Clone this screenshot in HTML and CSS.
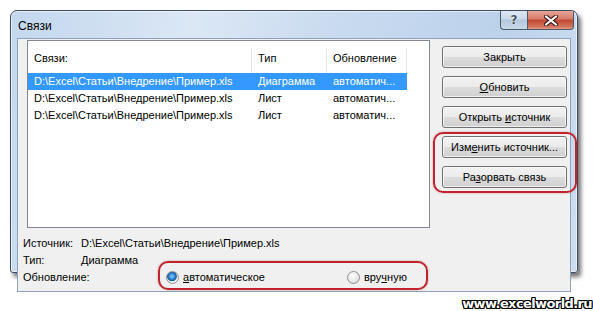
FILE: index.html
```html
<!DOCTYPE html>
<html lang="ru">

<head>
    <meta charset="UTF-8">
    <title>Связи</title>
    <link rel="stylesheet" href="styles.css">
</head>

<body>
    <div class="window">
        <!-- Заголовок окна -->
        <div class="titlebar">
            <span class="title">Связи</span>
            <div class="caption-btns">
                <span class="cap help">?</span>
                <span class="cap close">
                    <svg width="14" height="11" viewBox="0 0 14 11">
                        <path d="M2 1.5 L12 9.5 M12 1.5 L2 9.5" stroke="#3b1a1a" stroke-width="4.2" stroke-linecap="round"/>
                        <path d="M2 1.5 L12 9.5 M12 1.5 L2 9.5" stroke="#fff" stroke-width="2.2" stroke-linecap="round"/>
                    </svg>
                </span>
            </div>
        </div>

        <div class="client">
            <div class="top">
                <!-- Список связей -->
                <div class="list">
                    <div class="list-head">
                        <span class="col c1">Связи:</span>
                        <span class="col c2">Тип</span>
                        <span class="col c3">Обновление</span>
                    </div>
                    <div class="row selected">
                        <span class="col c1">D:\Excel\Статьи\Внедрение\Пример.xls</span>
                        <span class="col c2">Диаграмма</span>
                        <span class="col c3">автоматич...</span>
                    </div>
                    <div class="row">
                        <span class="col c1">D:\Excel\Статьи\Внедрение\Пример.xls</span>
                        <span class="col c2">Лист</span>
                        <span class="col c3">автоматич...</span>
                    </div>
                    <div class="row">
                        <span class="col c1">D:\Excel\Статьи\Внедрение\Пример.xls</span>
                        <span class="col c2">Лист</span>
                        <span class="col c3">автоматич...</span>
                    </div>
                </div>

                <!-- Кнопки -->
                <div class="buttons">
                    <button class="btn">Закрыть</button>
                    <button class="btn"><u>О</u>бновить</button>
                    <button class="btn">Открыть <u>и</u>сточник</button>
                    <button class="btn">Изм<u>е</u>нить источник...</button>
                    <button class="btn">Ра<u>з</u>орвать связь</button>
                </div>
            </div>

            <!-- Сведения о связи -->
            <div class="info">
                <span class="label">Источник:</span>
                <span class="value">D:\Excel\Статьи\Внедрение\Пример.xls</span>
                <span class="label">Тип:</span>
                <span class="value">Диаграмма</span>
                <span class="label">Обновление:</span>
                <span class="value radios">
                    <span class="radio-item first"><span class="radio checked"></span><u>а</u>втоматическое</span>
                    <span class="radio-item"><span class="radio"></span>вру<u>ч</u>ную</span>
                </span>
            </div>
        </div>
    </div>

    <!-- Красные пометки поверх окна -->
    <div class="mark mark-buttons"></div>
    <div class="mark mark-radios"></div>

    <div class="watermark">www.excelworld.ru</div>
</body>

</html>
```

FILE: styles.css
```css
/* Общие стили */
body {
    margin: 0;
    background-color: #fff;
    font-family: "Liberation Sans", Arial, sans-serif;
    font-size: 11px;
    color: #000;
    width: 593px;
    height: 311px;
    position: relative;
    overflow: hidden;
}

/* Окно */
.window {
    margin: 10px 0 0 10px;
    width: 554px;
    height: 255px;
    padding: 0 6px 6px 6px;
    border: 1px solid #3d4b5c;
    border-radius: 7px 7px 3px 3px;
    background: linear-gradient(100deg, #c3d7ee 0%, #dbe7f5 30%, #c8daef 55%, #bcd2eb 80%, #cddef0 100%);
    box-shadow: 3px 4px 4px rgba(0, 0, 0, 0.55), inset 0 0 0 1px rgba(255, 255, 255, 0.6);
}

.titlebar {
    height: 27px;
    display: flex;
    justify-content: space-between;
    align-items: flex-start;
}

.title {
    font-size: 12px;
    margin: 8px 0 0 1px;
    color: #000;
}

.caption-btns {
    display: flex;
    margin-right: -3px;
}

.cap {
    height: 18px;
    border: 1px solid #4b5a6b;
    border-top: none;
    display: flex;
    align-items: center;
    justify-content: center;
}

.help {
    width: 26px;
    border-radius: 0 0 0 4px;
    background: linear-gradient(#dde8f4 0%, #c9d8e8 45%, #b4c6da 50%, #c8d9ea 100%);
    color: #4a5563;
    font-family: "DejaVu Sans", sans-serif;
    font-size: 12px;
    font-weight: bold;
    text-shadow: 0 0 2px #fff;
    border-right: none;
}

.close {
    width: 45px;
    border-radius: 0 0 4px 0;
    background: linear-gradient(#e7a595 0%, #d77c6a 45%, #c24630 50%, #d0705a 85%, #e49a82 100%);
}

.client {
    height: 252px;
    border: 1px solid #8ea3bb;
    background-color: #f0f0f0;
}

.top {
    display: flex;
    padding: 1px 0 0 9px;
    gap: 12px;
}

/* Список */
.list {
    width: 401px;
    height: 186px;
    border: 1px solid #828790;
    background-color: #fff;
}

.list-head {
    display: flex;
    height: 32px;
    align-items: flex-end;
}

.list-head .col {
    height: 25px;
    line-height: 20px;
    border-right: 1px solid #e5e5e5;
}

.col {
    padding-left: 6px;
    white-space: nowrap;
    overflow: hidden;
    box-sizing: border-box;
}

.c1 {
    width: 224px;
}

.c2 {
    width: 75px;
}

.c3 {
    width: 80px;
}

.row {
    display: flex;
    height: 17px;
    line-height: 16px;
    width: 379px;
}

.row.selected {
    background-color: #3399ff;
    color: #fff;
}

/* Кнопки */
.buttons {
    display: flex;
    flex-direction: column;
    gap: 8px;
    margin-top: 6px;
}

.btn {
    width: 125px;
    height: 22px;
    padding: 0;
    font-family: "Liberation Sans", Arial, sans-serif;
    font-size: 11px;
    color: #000;
    border: 1px solid #707070;
    border-radius: 3px;
    background: linear-gradient(#f2f2f2 0%, #ebebeb 50%, #dddddd 50%, #cfcfcf 100%);
    box-shadow: inset 0 0 0 1px rgba(255, 255, 255, 0.7);
}

/* Сведения */
.info {
    display: grid;
    grid-template-columns: 58px 1fr;
    margin: 7px 0 0 5px;
    line-height: 17px;
}

.radios {
    display: flex;
    align-items: center;
    padding-left: 85px;
}

.radio-item {
    display: flex;
    align-items: center;
}

.radio-item.first {
    width: 181px;
}

.radio {
    width: 11px;
    height: 11px;
    margin-right: 4px;
    border-radius: 50%;
    border: 1px solid #8e8f8f;
    background: radial-gradient(circle at 40% 35%, #fff 0%, #e6e6e6 60%, #cfcfcf 100%);
}

.radio.checked {
    background: radial-gradient(circle at 45% 40%, #8fd2ff 0%, #2a7fd0 35%, #1b5a9c 50%, #e8eef5 58%, #fff 100%);
}

/* Пометки */
.mark {
    position: absolute;
    border: 2px solid #bf232c;
    border-radius: 10px;
    box-shadow: 0 0 2px rgba(191, 35, 44, 0.5);
}

.mark-buttons {
    left: 433px;
    top: 132px;
    width: 140px;
    height: 57px;
}

.mark-radios {
    left: 158px;
    top: 261px;
    width: 266px;
    height: 25px;
}

.watermark {
    position: absolute;
    right: 1px;
    bottom: 0;
    font-family: "DejaVu Sans", sans-serif;
    font-weight: bold;
    font-size: 13px;
    letter-spacing: -0.6px;
    color: #fff;
    text-shadow: 1px 0 0 #000, -1px 0 0 #000, 0 1px 0 #000, 0 -1px 0 #000, 1px 1px 0 #000, -1px -1px 0 #000, 1px -1px 0 #000, -1px 1px 0 #000;
}
```
